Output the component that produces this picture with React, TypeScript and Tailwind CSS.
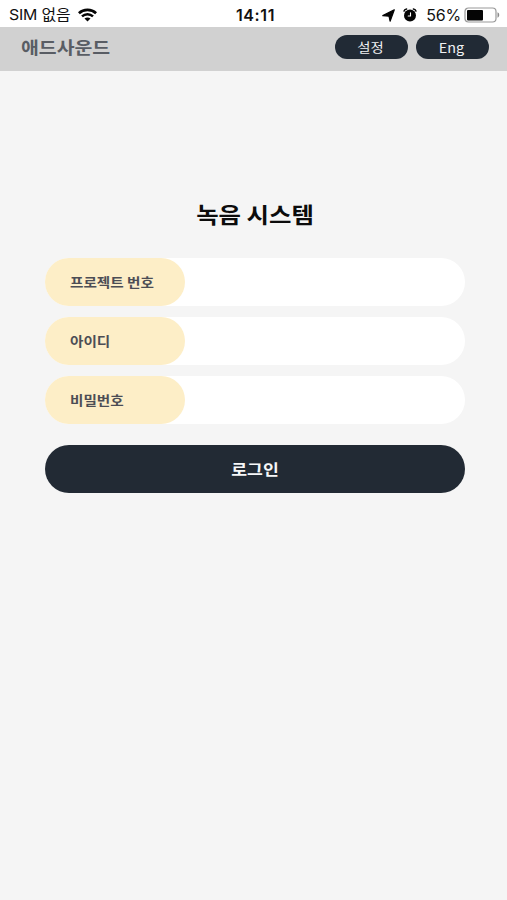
import React from "react";

function Wifi() {
  return (
    <svg className="ml-2 h-[14px] w-[19px]" viewBox="0 0 19 14" fill="none" stroke="#050505">
      <path d="M.9 5.2C5.6.7 13.4.7 18.1 5.2" strokeWidth="2.7" />
      <path d="M4 8.3c3.1-2.9 7.9-2.9 11 0" strokeWidth="2.5" />
      <path d="M9.5 13.6 6.5 10.5c1.7-1.5 4.3-1.5 6 0Z" fill="#050505" stroke="none" />
    </svg>
  );
}

function LocationArrow() {
  return (
    <svg className="h-[13px] w-[13px]" viewBox="0 0 13 13">
      <path d="M12.3.8 8.1 12.2 7 7.2.8 6.6Z" fill="#050505" stroke="#050505" strokeWidth="1.2" strokeLinejoin="round" />
    </svg>
  );
}

function Alarm() {
  return (
    <svg className="ml-2 h-[14px] w-[14px]" viewBox="0 0 14 14" fill="none" strokeLinecap="round">
      <path d="M1 3.1C1.2 2 2.2 1.2 3.6 1M13 3.1C12.8 2 11.8 1.2 10.4 1" stroke="#050505" strokeWidth="1.5" />
      <circle cx="7" cy="7.5" r="6" fill="#050505" />
      <path d="M7.5 4.7v3.3H5.2" stroke="#fff" strokeWidth="1.1" />
    </svg>
  );
}

function Battery() {
  return (
    <svg className="ml-[3px] h-4 w-9" viewBox="0 0 36 16">
      <rect x="1" y="1" width="31" height="14" rx="3.5" fill="#fff" stroke="#999" strokeWidth="1.2" />
      <rect x="3" y="3" width="16" height="10.5" rx="1" fill="#050505" />
      <path d="M33.5 5.3c2.3.7 2.3 4.7 0 5.4Z" fill="#8b8b8b" />
    </svg>
  );
}

function Field({ label, type = "text" }: { label: string; type?: string }) {
  return (
    <label className="flex h-12 rounded-full bg-white">
      <span className="flex w-[140px] shrink-0 items-center rounded-full bg-[#fdeec7] pl-[25px] text-[14.6px] font-bold text-[#4c4d55]">
        <span className="-mt-px block scale-y-[0.89]">{label}</span>
      </span>
      <input type={type} aria-label={label} className="min-w-0 flex-1 rounded-r-full bg-transparent px-4 outline-none" />
    </label>
  );
}

export default function App() {
  return (
    <div className="min-h-[900px] w-full bg-[#f5f5f5] font-['Noto_Sans_CJK_KR',sans-serif]">
      <div className="grid h-[27px] grid-cols-3 bg-white pt-[3px] font-['Inter','Noto_Sans_CJK_KR',sans-serif] text-[#111]">
        <div className="flex items-center pl-[9px] text-[15.9px] tracking-[-0.2px]">
          <span className="block scale-y-[0.95]">SIM 없음</span>
          <Wifi />
        </div>
        <div className="flex items-center justify-center pl-1 text-[16px] font-semibold tracking-[0.6px]">14:11</div>
        <div className="flex items-center justify-end pr-[7px] text-[16px]">
          <LocationArrow />
          <Alarm />
          <span className="ml-[9px] tracking-[-0.2px]">56%</span>
          <Battery />
        </div>
      </div>
      <header className="flex h-11 items-center justify-between bg-[#d1d1d1] pl-[21px] pr-[18px]">
        <h1 className="-mt-[5px] scale-y-[0.89] text-[19.4px] font-bold leading-6 text-[#595d64]">애드사운드</h1>
        <div className="-mt-1 flex gap-2 text-[14.4px] leading-6 text-[#f0f1f3]">
          <button className="h-6 w-[73px] rounded-full bg-[#212a35] pr-[2px]">
            <span className="block scale-y-[0.89]">설정</span>
          </button>
          <button className="h-6 w-[73px] rounded-full bg-[#212a35] pr-[2px]">
            <span className="block scale-y-[0.93]">Eng</span>
          </button>
        </div>
      </header>
      <main className="pl-[45px] pr-[42px] pt-[126px]">
        <h2 className="-mt-px scale-y-[0.89] text-center text-[24.4px] font-bold leading-9 text-[#0c0c0c]">녹음 시스템</h2>
        <form className="flex flex-col pt-[26px]" onSubmit={(e) => e.preventDefault()}>
          <div className="flex flex-col gap-[11px]">
            <Field label="프로젝트 번호" />
            <Field label="아이디" />
            <Field label="비밀번호" type="password" />
          </div>
          <button className="mt-[21px] h-12 rounded-full bg-[#222a34] text-[17.2px] font-bold text-[#f6f7f8]">
            <span className="block scale-y-[0.89]">로그인</span>
          </button>
        </form>
      </main>
    </div>
  );
}
